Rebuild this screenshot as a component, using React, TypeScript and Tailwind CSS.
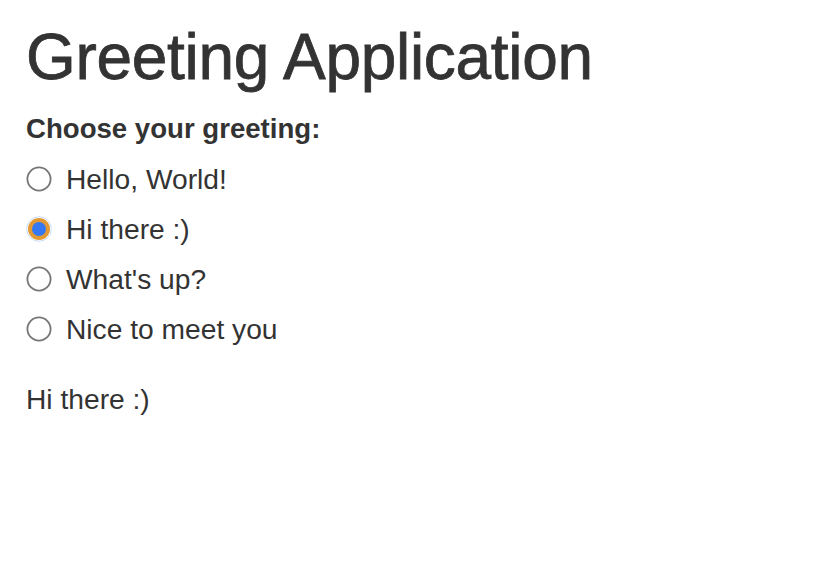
import React, { useState } from "react";

const options = ["Hello, World!", "Hi there :)", "What's up?", "Nice to meet you"];

function Radio({ checked }: { checked: boolean }) {
  if (checked) {
    return (
      <svg width="26" height="26" viewBox="0 0 26 26" className="shrink-0">
        <circle cx="13" cy="13" r="12.3" fill="none" stroke="#c9dcf7" strokeWidth="1" />
        <circle cx="13" cy="13" r="9" fill="#3478f6" stroke="#e39a35" strokeWidth="4" />
      </svg>
    );
  }
  return (
    <svg width="26" height="26" viewBox="0 0 26 26" className="shrink-0">
      <circle cx="13" cy="13" r="11.6" fill="#ffffff" stroke="#767676" strokeWidth="1.8" />
    </svg>
  );
}

export default function App() {
  const [sel, setSel] = useState(1);
  return (
    <div
      className="min-h-[578px] bg-white text-[#333333] pl-[26px] pt-[24px]"
      style={{ fontFamily: '"Liberation Sans", Arial, sans-serif' }}
    >
      <h1 className="text-[64px] leading-[66px] font-normal tracking-[-0.3px] [-webkit-text-stroke:0.8px_#333333]">
        Greeting Application
      </h1>
      <div className="mt-[24px] text-[27.6px] leading-[30px] font-bold">Choose your greeting:</div>
      <div className="mt-[20px] flex flex-col gap-[20px]">
        {options.map((o, i) => (
          <label key={o} className="flex items-center gap-[14px] h-[30px] cursor-pointer" onClick={() => setSel(i)}>
            <Radio checked={sel === i} />
            <span className="text-[28.2px] leading-[30px]">{o}</span>
          </label>
        ))}
      </div>
      <div className="mt-[40px] text-[28.2px] leading-[30px]">{options[sel]}</div>
    </div>
  );
}
